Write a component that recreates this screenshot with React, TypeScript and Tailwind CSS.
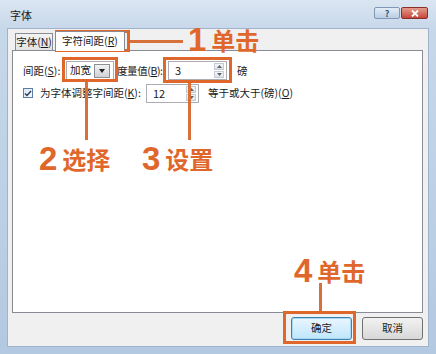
import React from "react";

const ORANGE = "text-[#e0672c]";

function U({ children }: { children: React.ReactNode }) {
  return <span className="underline underline-offset-[1px]">{children}</span>;
}

function Spin({ value, width }: { value: string; width: string }) {
  return (
    <div className={`${width} h-[19px] shrink-0 bg-white border border-[#abadb3] flex items-center`}>
      <span className="pl-[6px] flex-1 leading-none text-[11px]">{value}</span>
      <div className="w-[10px] h-[15px] mr-[2px] flex flex-col gap-[1px]">
        <div className="flex-1 bg-gradient-to-b from-[#f4f6f8] to-[#dfe4ea] border border-[#c5cbd2] flex items-center justify-center">
          <svg width="5" height="3" viewBox="0 0 5 3"><path d="M0 3 L2.5 0 L5 3Z" fill="#5b6470" /></svg>
        </div>
        <div className="flex-1 bg-gradient-to-b from-[#f4f6f8] to-[#dfe4ea] border border-[#c5cbd2] flex items-center justify-center">
          <svg width="5" height="3" viewBox="0 0 5 3"><path d="M0 0 L2.5 3 L5 0Z" fill="#5b6470" /></svg>
        </div>
      </div>
    </div>
  );
}

function Box({ className }: { className: string }) {
  return <div className={`absolute border-[3px] border-[#e0672c] ${className}`} />;
}

function Label({ num, text, className }: { num: string; text: string; className: string }) {
  return (
    <div className={`absolute flex items-end gap-[5px] ${ORANGE} ${className}`}>
      <span className="font-['Liberation_Sans',sans-serif] font-bold text-[33px] leading-[26px]">{num}</span>
      <span className="font-['Noto_Sans_CJK_SC',sans-serif] font-bold text-[24px] leading-[26px]">{text}</span>
    </div>
  );
}

export default function App() {
  return (
    <div className="relative w-[436px] h-[354px] flex flex-col bg-gradient-to-b from-[#c9d9eb] to-[#b3c9e1] font-['Noto_Sans_CJK_SC',sans-serif] text-[10.5px] text-[#1a1a1a] overflow-hidden whitespace-nowrap">
      {/* title bar */}
      <div className="h-[28px] flex items-start pl-[10px] pr-[8px] bg-gradient-to-b from-[#dbe6f2] to-[#c8d8ea]">
        <span className="mt-[8px] text-[11px] leading-[14px]">字体</span>
        <div className="ml-auto mt-[7px] flex gap-[1px]">
          <div className="w-[26px] h-[12px] rounded-[2px] border border-[#7e98b6] bg-gradient-to-b from-[#e4edf7] to-[#b9cde3] flex items-center justify-center text-[9px] leading-none font-bold text-[#3d5673]">
            ?
          </div>
          <div className="w-[27px] h-[12px] rounded-[2px] border border-[#8b2f2a] bg-gradient-to-b from-[#e49a8c] to-[#c4453a] flex items-center justify-center">
            <svg width="8" height="7" viewBox="0 0 8 7"><path d="M1 0.5 L7 6.5 M7 0.5 L1 6.5" stroke="#fff" strokeWidth="1.8" /></svg>
          </div>
        </div>
      </div>

      {/* dialog body */}
      <div className="mx-[7px] mb-[7px] flex-1 flex flex-col bg-[#f0f0f0] border border-[#9fb3ca] pl-[4px] pr-[5px]">
        {/* tabs */}
        <div className="h-[21px] flex items-end pl-[3px]">
          <div className="w-[38px] h-[17px] border border-b-0 border-[#898c95] bg-gradient-to-b from-[#f3f3f3] to-[#e3e3e3] flex items-center justify-center leading-none">
            字体(<U>N</U>)
          </div>
          <div className="relative z-10 -mb-px ml-[2px] w-[70px] h-[20px] border border-b-0 border-[#898c95] bg-white flex items-center justify-center leading-none">
            字符间距(<U>R</U>)
          </div>
        </div>

        {/* panel */}
        <div className="h-[263px] bg-white border border-[#898c95] pt-[10px] pl-[10px] flex flex-col gap-[3px]">
          <div className="flex items-center h-[19px]">
            <span className="w-[43px] shrink-0">间距(<U>S</U>):</span>
            <div className="w-[48px] h-[19px] shrink-0 border border-[#abadb3] bg-white flex items-center">
              <span className="pl-[3px] flex-1 leading-none">加宽</span>
              <div className="w-[16px] h-[14px] mr-[3px] border border-[#8a8f96] bg-gradient-to-b from-[#f2f2f2] to-[#cfd2d6] flex items-center justify-center">
                <svg width="6" height="4" viewBox="0 0 6 4"><path d="M0 0 L3 4 L6 0Z" fill="#222" /></svg>
              </div>
            </div>
            <span className="w-[54px] shrink-0 pl-[3px] tracking-[-0.4px]">度量值(<U>B</U>):</span>
            <Spin value="3" width="w-[59px]" />
            <span className="ml-[10px]">磅</span>
          </div>
          <div className="flex items-center h-[20px]">
            <div className="w-[10px] h-[10px] shrink-0 border border-[#5e7da3] bg-gradient-to-br from-[#dfe8f3] to-[#f7f9fc] flex items-center justify-center">
              <svg width="8" height="7" viewBox="0 0 8 7"><path d="M1 3.5 L3 5.5 L7 1" stroke="#2a3f66" strokeWidth="1.5" fill="none" /></svg>
            </div>
            <span className="w-[113px] shrink-0 pl-[7px]">为字体调整字间距(<U>K</U>):</span>
            <Spin value="12" width="w-[53px]" />
            <span className="ml-[9px]">等于或大于(磅)(<U>O</U>)</span>
          </div>
        </div>

        {/* buttons */}
        <div className="flex-1 flex items-start justify-end gap-[10px] pt-[4px]">
          <button className="w-[61px] h-[23px] rounded-[3px] border border-[#3c7fb1] bg-gradient-to-b from-[#eaf6fd] to-[#bee6fd] shadow-[inset_0_0_0_1px_#a8d8f5] leading-none">
            确定
          </button>
          <button className="w-[61px] h-[23px] rounded-[3px] border border-[#707070] bg-gradient-to-b from-[#f2f2f2] to-[#d8d8d8] leading-none">
            取消
          </button>
        </div>
      </div>

      {/* annotations */}
      <Box className="left-[55px] top-[30px] w-[75px] h-[22px]" />
      <div className="absolute left-[130px] top-[40px] w-[53px] h-[3px] bg-[#d8703a]" />
      <Label num="1" text="单击" className="left-[188px] top-[27px]" />

      <Box className="left-[62px] top-[57px] w-[56px] h-[25px]" />
      <div className="absolute left-[85px] top-[82px] w-[3px] h-[58px] bg-[#d8703a]" />
      <Label num="2" text="选择" className="left-[39px] top-[146px]" />

      <Box className="left-[163px] top-[57px] w-[69px] h-[26px]" />
      <div className="absolute left-[188px] top-[83px] w-[3px] h-[57px] bg-[#d8703a]" />
      <Label num="3" text="设置" className="left-[142px] top-[146px]" />

      <Label num="4" text="单击" className="left-[294px] top-[258px]" />
      <div className="absolute left-[319px] top-[283px] w-[3px] h-[29px] bg-[#d8703a]" />
      <Box className="left-[283px] top-[311px] w-[73px] h-[33px]" />
    </div>
  );
}
